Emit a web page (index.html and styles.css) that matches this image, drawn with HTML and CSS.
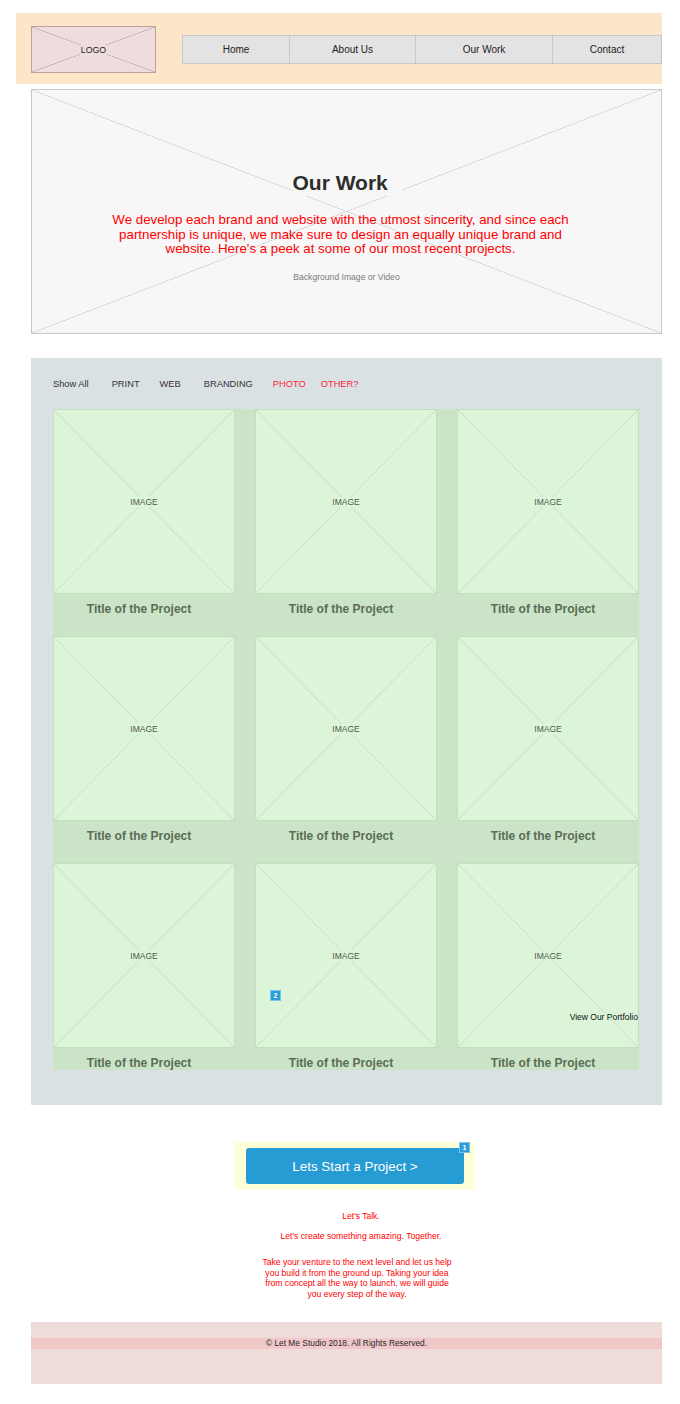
FILE: index.html
```html
<!DOCTYPE html>
<html lang="en">
<head>
<meta charset="utf-8">
<title>Our Work</title>
<link rel="stylesheet" href="styles.css">
</head>
<body>
<div class="page">
  <header class="site-header">
    <div class="logo x-box"><span>LOGO</span></div>
    <nav class="nav">
      <a class="nav-item nav-home">Home</a>
      <a class="nav-item nav-about">About Us</a>
      <a class="nav-item nav-work">Our Work</a>
      <a class="nav-item nav-contact">Contact</a>
    </nav>
  </header>

  <section class="hero x-box">
    <h1 class="hero-title">Our Work</h1>
    <p class="hero-text">We develop each brand and website with the utmost sincerity, and since each partnership is unique, we make sure to design an equally unique brand and website. Here's a peek at some of our most recent projects.</p>
    <p class="hero-note">Background Image or Video</p>
  </section>

  <section class="gallery">
    <ul class="filters">
      <li class="filter f-all">Show All</li>
      <li class="filter f-print">PRINT</li>
      <li class="filter f-web">WEB</li>
      <li class="filter f-brand">BRANDING</li>
      <li class="filter f-photo red">PHOTO</li>
      <li class="filter f-other red">OTHER?</li>
    </ul>
    <div class="grid">
      <div class="card"><div class="img x-box"><span>IMAGE</span></div><div class="card-title">Title of the Project</div></div>
      <div class="card"><div class="img x-box"><span>IMAGE</span></div><div class="card-title">Title of the Project</div></div>
      <div class="card"><div class="img x-box"><span>IMAGE</span></div><div class="card-title">Title of the Project</div></div>
      <div class="card"><div class="img x-box"><span>IMAGE</span></div><div class="card-title">Title of the Project</div></div>
      <div class="card"><div class="img x-box"><span>IMAGE</span></div><div class="card-title">Title of the Project</div></div>
      <div class="card"><div class="img x-box"><span>IMAGE</span></div><div class="card-title">Title of the Project</div></div>
      <div class="card"><div class="img x-box"><span>IMAGE</span></div><div class="card-title">Title of the Project</div></div>
      <div class="card"><div class="img x-box"><span>IMAGE</span><b class="badge badge-2">2</b></div><div class="card-title">Title of the Project</div></div>
      <div class="card"><div class="img x-box"><span>IMAGE</span><a class="portfolio-link">View Our Portfolio</a></div><div class="card-title">Title of the Project</div></div>
    </div>
  </section>

  <section class="cta">
    <div class="cta-box">
      <a class="cta-button">Lets Start a Project &gt;</a>
      <b class="badge badge-1">1</b>
    </div>
    <p class="cta-talk">Let's Talk.</p>
    <p class="cta-sub">Let's create something amazing. Together.</p>
    <p class="cta-text">Take your venture to the next level and let us help you build it from the ground up. Taking your idea from concept all the way to launch, we will guide you every step of the way.</p>
  </section>

  <footer class="site-footer">
    <p class="copyright">© Let Me Studio 2018. All Rights Reserved.</p>
  </footer>
</div>
</body>
</html>
```

FILE: styles.css
```css
* { box-sizing: border-box; }

body {
  margin: 0;
  background: #ffffff;
  font-family: "Liberation Sans", Arial, sans-serif;
  color: #222;
}

.page {
  width: 680px;
  padding: 13px 18px 20px 31px;
}

/* placeholder boxes with an X */
.x-box {
  position: relative;
  display: flex;
  align-items: center;
  justify-content: center;
  --x-line: #c9c9c9;
  background-image:
    linear-gradient(to top right, transparent calc(50% - 0.6px), var(--x-line) 50%, transparent calc(50% + 0.6px)),
    linear-gradient(to bottom right, transparent calc(50% - 0.6px), var(--x-line) 50%, transparent calc(50% + 0.6px));
}

/* header */
.site-header {
  margin-left: -15px;
  height: 71px;
  background: #fde5c7;
  display: flex;
  align-items: flex-start;
  padding: 13px 0 0 15px;
}

.logo {
  width: 126px;
  height: 47px;
  background-color: #efdcdc;
  border: 1px solid #b9a2a2;
  --x-line: #bba3a3;
  font-size: 8.8px;
  color: #222;
}
.logo span { background: #efdcdc; padding: 0 1px; }

.nav {
  margin: 9px 0 0 26px;
  display: flex;
  height: 29px;
  border: 1px solid #c7c7c7;
  background: #e3e3e3;
}
.nav-item {
  display: flex;
  align-items: center;
  justify-content: center;
  font-size: 10px;
  color: #222;
  border-left: 1px solid #c9c9c9;
}
.nav-item:first-child { border-left: 0; }
.nav-home { width: 106px; }
.nav-about { width: 126px; }
.nav-work { width: 137px; }
.nav-contact { width: 109px; }

/* hero */
.hero {
  margin-top: 5px;
  height: 245px;
  background-color: #f7f7f7;
  border: 1px solid #c8c8c8;
  --x-line: #cacaca;
  flex-direction: column;
  justify-content: flex-start;
  padding-top: 80px;
}
.hero-title {
  margin: 0;
  width: 110px;
  padding-left: 1px;
  background: #f7f7f7;
  font-size: 21px;
  line-height: 26px;
  font-weight: bold;
  color: #2e2e2e;
  text-align: left;
}
.hero-text {
  margin: 17px 12px 0 0;
  width: 460px;
  font-size: 13.3px;
  line-height: 14.5px;
  color: #ff0000;
  text-align: center;
}
.hero-note {
  margin: 15px 0 0 0;
  font-size: 8.6px;
  line-height: 11px;
  color: #7a7a7a;
}

/* gallery */
.gallery {
  margin-top: 24px;
  height: 747px;
  background: #dae1e3;
  padding: 20px 23px 0 22px;
}
.filters {
  list-style: none;
  margin: 0;
  padding: 0;
  display: flex;
  height: 12px;
  align-items: center;
  font-size: 9.3px;
  color: #333;
}
.filter { margin-right: 23px; }
.f-all { margin-right: 23px; }
.f-print { margin-right: 20px; }
.f-web { margin-right: 23px; }
.f-brand { margin-right: 20px; }
.f-photo { margin-right: 15px; }
.red { color: #fa1e3c; }

.grid {
  margin-top: 19px;
  height: 661px;
  overflow: hidden;
  background: #cbe4c7;
  display: grid;
  grid-template-columns: repeat(3, 182px);
  grid-auto-rows: 227px;
  column-gap: 20px;
}
.card {
  display: flex;
  flex-direction: column;
}
.img {
  height: 185px;
  background-color: #dcf5d9;
  border: 1px solid #c4dfc0;
  --x-line: #c3dcbf;
  font-size: 8.5px;
  color: #4d5a4a;
}
.img span { background: #dcf5d9; }
.card-title {
  height: 42px;
  padding: 8px 10px 0 0;
  text-align: center;
  font-size: 12px;
  line-height: 14px;
  font-weight: bold;
  color: #5a6d56;
}

.badge {
  position: absolute;
  width: 11px;
  height: 11px;
  background: #2b9fd9;
  border: 1px solid #7cc4e8;
  color: #fff;
  font-size: 7px;
  line-height: 9px;
  font-weight: bold;
  text-align: center;
}
.badge-2 { left: 14px; top: 126px; }
.badge-1 { right: 5px; top: 0; }

.portfolio-link {
  position: absolute;
  right: 0;
  bottom: 25px;
  font-size: 8.5px;
  line-height: 10px;
  color: #111;
}

/* call to action */
.cta {
  margin-top: 37px;
  display: flex;
  flex-direction: column;
  align-items: center;
  color: #ff0000;
}
.cta-box {
  position: relative;
  margin-left: 17px;
  width: 240px;
  height: 48px;
  background: #fefed8;
  padding: 6px 11px 6px;
}
.cta-button {
  display: flex;
  align-items: center;
  justify-content: center;
  height: 36px;
  background: #279bd4;
  border-radius: 3px;
  color: #fff;
  font-size: 13.4px;
}
.cta-talk {
  margin: 21px 0 0 29px;
  font-size: 8.5px;
  line-height: 10px;
}
.cta-sub {
  margin: 10px 0 0 29px;
  font-size: 8.6px;
  line-height: 10px;
}
.cta-text {
  margin: 16px 0 0 21px;
  width: 198px;
  text-align: center;
  font-size: 8.6px;
  line-height: 10.7px;
}

/* footer */
.site-footer {
  margin-top: 22px;
  height: 62px;
  background: #f0dbdb;
  padding-top: 16px;
}
.copyright {
  margin: 0;
  height: 11px;
  background: #f0c8c8;
  text-align: center;
  font-size: 8.4px;
  line-height: 11px;
  color: #2a2a2a;
}
```
